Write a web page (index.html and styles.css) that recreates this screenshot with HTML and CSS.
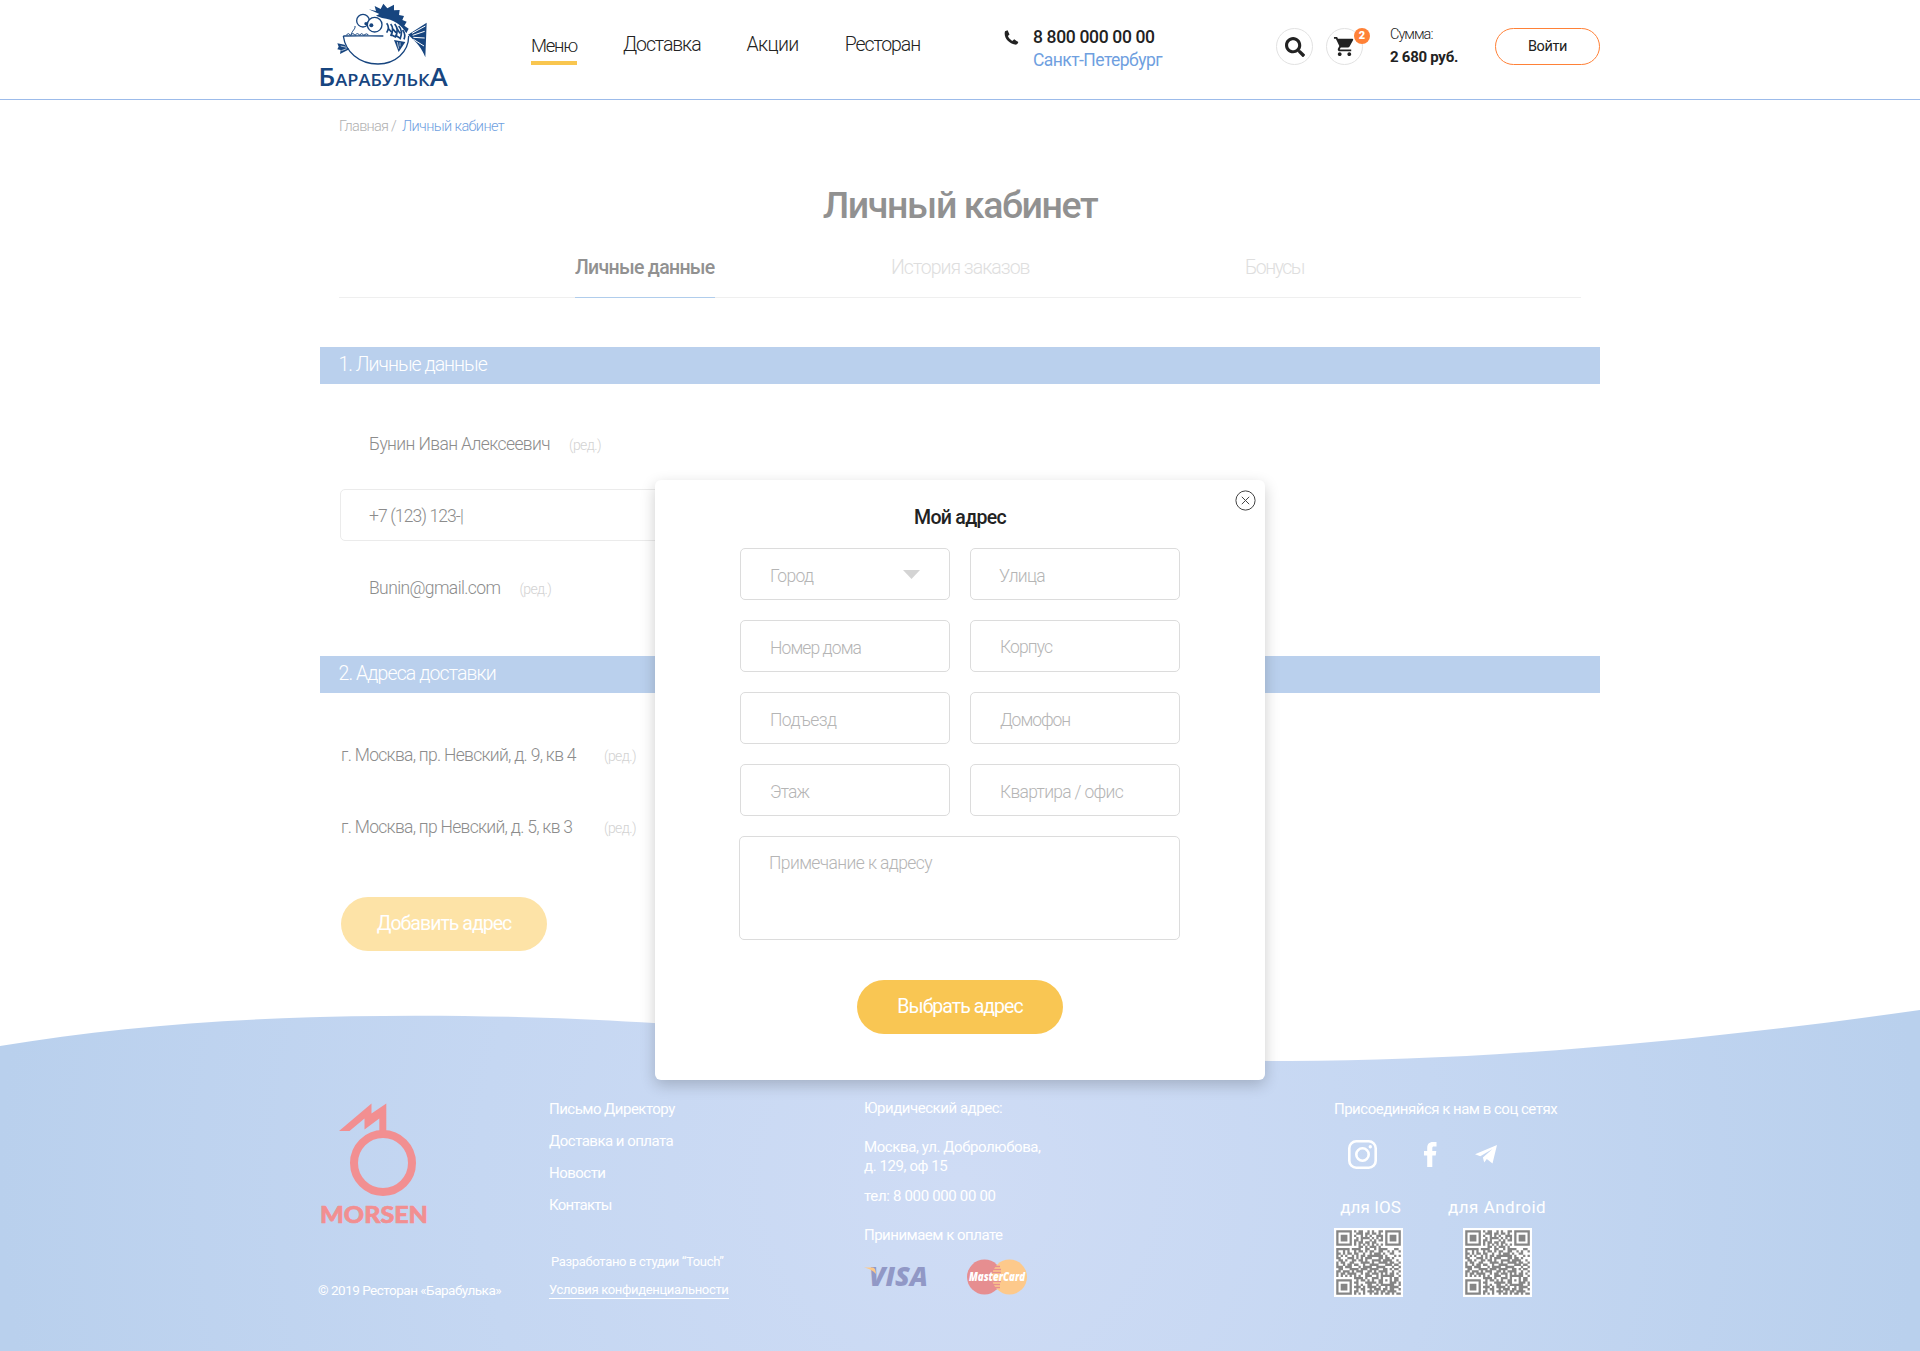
FILE: index.html
```html
<!DOCTYPE html>
<html lang="ru">
<head>
<meta charset="utf-8">
<title>Барабулька — Личный кабинет</title>
<link rel="stylesheet" href="styles.css">
</head>
<body>
<header class="header">
  <div class="header__inner">
    <a class="logo" href="#">
      <svg width="130" height="90" viewBox="0 0 390 270" fill="none" stroke="#17457f" stroke-width="4">
        <path d="M146 28L168 33 164 18 182 27 190 11 202 25 222 14 222 31 239 30 237 45 252 48 247 60 260 65 253 77 266 86 259 100C244 74 222 58 186 54L168 47 178 42z" fill="#17457f" stroke="none"/>
        <path d="M70 108c6 46 46 84 104 84 52 0 92-36 92-84M70 108c48 0 80-1 120 0" />
        <path d="M105 78c2 10-10 14-12 28m-14 0q6-10 12 0 8-10 14 0 8-10 14 0 6-10 12 0 8-8 14-2" stroke-width="3"/>
        <circle cx="129" cy="62" r="19" fill="#fff"/><circle cx="164" cy="74" r="22" fill="#fff"/>
        <circle cx="138" cy="71" r="5" fill="#17457f" stroke="none"/><circle cx="154" cy="76" r="6" fill="#17457f" stroke="none"/>
        <path d="M200 70q10 12 0 28M212 72q12 14 0 36m12-36q14 16 2 40m10-34q14 14 4 40m8-28q10 14 4 28M204 84l10 12m2-12l12 14m2-14l10 16m-26 4l14 8m2-4l12 8" stroke-width="5"/>
        <path d="M264 104l56-36-4 104c-10-26-26-46-52-68z" fill="#17457f" stroke="none"/>
        <path d="M276 100l40-22M278 106l36-12M280 112l34 2M280 118l32 20M278 124l30 36" stroke="#fff" stroke-width="3"/>
        <path d="M222 120l34 6-20 30z" fill="#17457f" stroke="none"/><path d="M232 126l4 20m4-19l0 12" stroke="#fff" stroke-width="2"/>
        <path d="M52 130l22 4 14 14-28 14 2-12-10-2 4-8z" fill="#17457f" stroke="none"/><path d="M62 138l18 4m-16 10l16-6" stroke="#fff" stroke-width="2"/>
        <text class="logo__text" x="-5" y="259" textLength="388" lengthAdjust="spacingAndGlyphs"><tspan font-size="75">Б</tspan><tspan font-size="50">АРАБУЛЬК</tspan><tspan font-size="75">А</tspan></text>
      </svg>
    </a>
    <nav class="nav">
      <a class="nav__link nav__link--active">Меню</a>
      <a class="nav__link">Доставка</a>
      <a class="nav__link">Акции</a>
      <a class="nav__link">Ресторан</a>
    </nav>
    <div class="contact">
      <svg class="contact__icon" width="15" height="15" viewBox="0 0 15 15" fill="#222"><path d="M1 1.200L3.600.2 5.500 4.600 3.900 6C4.800 8 6.200 9.600 8.200 10.900L10.200 9.300 14.300 12.100C13.900 13.800 12.600 14.800 11 14.600 4.800 13.800-.8 7.400 1 1.200z"/></svg>
      <div class="contact__text">
        <span class="contact__phone">8 800 000 00 00</span>
        <span class="contact__city">Санкт-Петербург</span>
      </div>
    </div>
    <div class="tools">
      <a class="round"><svg width="20" height="20" viewBox="0 0 512 512" fill="#222"><path d="M505 442.700L405.300 343c-4.500-4.500-10.600-7-17-7H372c27.600-35.300 44-79.700 44-128C416 93.100 322.900 0 208 0S0 93.100 0 208s93.100 208 208 208c48.300 0 92.700-16.400 128-44v16.300c0 6.400 2.500 12.500 7 17l99.700 99.700c9.400 9.400 24.600 9.400 33.900 0l28.300-28.300c9.400-9.400 9.400-24.600.1-34zM208 336c-70.700 0-128-57.200-128-128 0-70.700 57.200-128 128-128 70.700 0 128 57.200 128 128 0 70.700-57.200 128-128 128z"/></svg></a>
      <a class="round round--cart"><svg width="23" height="23" viewBox="0 0 24 24" fill="#222"><path d="M7 18c-1.100 0-1.990.9-1.990 2S5.900 22 7 22s2-.9 2-2-.9-2-2-2zM1 2v2h2l3.600 7.590-1.350 2.450c-.16.280-.25.610-.25.960 0 1.100.9 2 2 2h12v-2H7.420c-.14 0-.25-.11-.25-.25l.03-.12.9-1.630h7.450c.75 0 1.410-.41 1.750-1.030l3.580-6.490A1.003 1.003 0 0020 4H5.210l-.94-2H1zm16 16c-1.100 0-1.990.9-1.990 2s.89 2 1.990 2 2-.9 2-2-.9-2-2-2z"/></svg><span class="badge">2</span></a>
    </div>
    <div class="sum">
      <span class="sum__label">Сумма:</span>
      <span class="sum__value">2 680 руб.</span>
    </div>
    <a class="login">Войти</a>
  </div>
</header>

<main class="main">
  <div class="crumbs"><span>Главная</span> / <a class="crumbs__current">Личный кабинет</a></div>
  <h1 class="title">Личный кабинет</h1>
  <div class="tabs">
    <a class="tab tab--active">Личные данные</a>
    <a class="tab">История заказов</a>
    <a class="tab">Бонусы</a>
  </div>
  <h2 class="bar">1. Личные данные</h2>
  <div class="profile">
    <div class="row"><span>Бунин Иван Алексеевич</span><a class="edit">(ред.)</a></div>
    <div class="row row--input"><span>+7 (123) 123-|</span></div>
    <div class="row"><span>Bunin@gmail.com</span><a class="edit">(ред.)</a></div>
  </div>
  <h2 class="bar">2. Адреса доставки</h2>
  <div class="addresses">
    <div class="address"><span class="address__text">г. Москва, пр. Невский, д. 9, кв 4</span><a class="edit">(ред.)</a></div>
    <div class="address"><span class="address__text">г. Москва, пр Невский, д. 5, кв 3</span><a class="edit">(ред.)</a></div>
  </div>
  <a class="btn btn--pale">Добавить адрес</a>
</main>

<footer class="footer">
  <svg class="footer__wave" width="1920" height="351" viewBox="0 1000 1920 351">
    <defs><radialGradient id="sea" gradientUnits="userSpaceOnUse" cx="960" cy="1180" r="960"><stop offset="0" stop-color="#cfdcf5"/><stop offset=".5" stop-color="#c5d7f2"/><stop offset="1" stop-color="#b9d0ed"/></radialGradient></defs>
    <path fill="url(#sea)" d="M0 1046C130 1024 270 1015.700 416 1015.700C760 1015.700 940 1061 1290 1061C1500 1061 1730 1037 1920 1010V1351H0Z"/>
  </svg>
  <div class="footer__inner">
    <div class="fcol fcol--brand">
      <svg width="110" height="122" viewBox="0 0 110 122" fill="#f28f91">
        <path d="M19 28L51.500 0.500V10.500L66.300.5V29h-7V15.500L44.500 26.500V15.500L29.500 28z"/>
        <circle cx="63" cy="60" r="29" fill="none" stroke="#f28f91" stroke-width="8"/>
        <text class="morsen" x="0" y="119.500" textLength="108" lengthAdjust="spacingAndGlyphs">MORSEN</text>
      </svg>
      <span class="copy">© 2019 Ресторан «Барабулька»</span>
    </div>
    <div class="fcol fcol--links">
      <a>Письмо Директору</a>
      <a>Доставка и оплата</a>
      <a>Новости</a>
      <a class="tight">Контакты</a>
      <span class="studio">Разработано в студии “Touch”</span>
      <a class="policy">Условия конфиденциальности</a>
    </div>
    <div class="fcol fcol--legal">
      <span>Юридический адрес:</span>
      <p class="place">Москва, ул. Добролюбова,<br>д. 129, оф 15</p>
      <span class="tel">тел: 8 000 000 00 00</span>
      <span class="pay">Принимаем к оплате</span>
      <div class="cards">
        <svg class="visa" width="65" height="20" viewBox="0 0 65 20"><text x="5" y="19.300" textLength="59" lengthAdjust="spacingAndGlyphs">VISA</text><path fill="#fdc989" d="M0 .5h8.500c2 0 3 1.500 3.500 6.500C9 3.500 5 1.500 0 .5z"/></svg>
        <svg class="mc" width="60" height="36" viewBox="0 0 60 36"><circle cx="17.500" cy="18" r="17.500" fill="#e68e90"/><circle cx="42.500" cy="18" r="17.500" fill="#fdc98b"/><path d="M26 7.500h7M25 10.500h9M25 13.500h9M25 22.500h9M25 25.500h8M26 28.500h7" stroke="#e68e90" stroke-width="1.500"/><text x="2" y="22" textLength="56" lengthAdjust="spacingAndGlyphs">MasterCard</text></svg>
      </div>
    </div>
    <div class="fcol fcol--social">
      <span>Присоединяйся к нам в соц сетях</span>
      <div class="social">
        <svg width="29" height="29" viewBox="0 0 29 29" fill="none" stroke="#fff" stroke-width="2.600"><rect x="1.300" y="1.300" width="26.400" height="26.400" rx="7"/><circle cx="14.500" cy="14.500" r="6.200"/><circle cx="22.300" cy="6.800" r="1.700" fill="#fff" stroke="none"/></svg>
        <svg width="13" height="25" viewBox="0 0 13 25" fill="#fff"><path d="M3.200 25V13.500H0V9h3.200V6.200C3.200 2.200 5 0 9 0h3.500v4.500H10C8.600 4.500 8.300 5 8.300 6.300V9h4l-.6 4.500H8.300V25z"/></svg>
        <svg width="22" height="19" viewBox="0 0 22 19" fill="#fff"><path d="M0 9.200L22 0 17.500 18.500 11.800 14 9.200 17.500 7.900 12.500 17.500 4 5.300 11.200z"/></svg>
      </div>
      <div class="apps">
        <div class="app"><span class="app__name">для IOS</span><svg class="qr" width="69" height="69" viewBox="-1 -1 31 31"></svg></div>
        <div class="app"><span class="app__name app__name--wide">для Android</span><svg class="qr" width="69" height="69" viewBox="-1 -1 31 31"></svg></div>
      </div>
    </div>
  </div>
</footer>

<section class="modal">
  <a class="modal__close"><svg width="21" height="21" viewBox="0 0 21 21" fill="none" stroke="#444"><circle cx="10.500" cy="10.500" r="9.600"/><path d="M6.800 6.800l7.400 7.400m0-7.400l-7.400 7.400"/></svg></a>
  <h3 class="modal__title">Мой адрес</h3>
  <form class="form">
    <div class="field field--select"><span>Город</span><svg width="17" height="9" viewBox="0 0 17 9" fill="#d4d4d4"><path d="M0 0h17L8.500 9z"/></svg></div>
    <div class="field"><span>Улица</span></div>
    <div class="field"><span>Номер дома</span></div>
    <div class="field field--up"><span>Корпус</span></div>
    <div class="field"><span>Подъезд</span></div>
    <div class="field"><span>Домофон</span></div>
    <div class="field"><span>Этаж</span></div>
    <div class="field"><span>Квартира / офис</span></div>
    <div class="field field--area"><span>Примечание к адресу</span></div>
  </form>
  <a class="btn">Выбрать адрес</a>
</section>
<script src="script.js"></script>
</body>
</html>
```
FILE: styles.css
```css
* { box-sizing: border-box; }
body { margin: 0; position: relative; height: 1351px; overflow: hidden; background: #fff; color: #222; font-family: Roboto, "Noto Sans", sans-serif; font-weight: 300; }
h1, h2, h3, p { margin: 0; font-weight: inherit; }
span, a { white-space: nowrap; }

/* header */
.header { height: 100px; border-bottom: 1px solid #9cbbea; }
.header__inner { width: 1280px; margin: 0 auto; display: flex; }
.logo { width: 211px; height: 90px; }
.logo svg { display: block; overflow: visible; }
.logo__text { font-family: "Open Sans", sans-serif; font-weight: 600; fill: #17457f; stroke: none; }
.nav { display: flex; gap: 46px; width: 473px; padding-top: 33px; }
.nav__link { font-size: 19.500px; line-height: 24px; height: 32px; letter-spacing: -1.080px; }
.nav__link--active { width: 46px; margin-top: 1px; border-bottom: 4px solid #f9c64f; font-size: 18.500px; line-height: 24px; height: 31px; letter-spacing: -1.250px; }
.nav__link:nth-child(3) { letter-spacing: -.65px; }
.contact { display: flex; width: 272px; padding-top: 26px; gap: 14px; }
.contact__icon { margin-top: 4px; }
.contact__text { display: flex; flex-direction: column; font-size: 17.500px; line-height: 23px; }
.contact__phone { font-weight: 500; letter-spacing: -.34px; }
.contact__city { font-weight: 400; color: #6f9fdf; letter-spacing: -.56px; }
.tools { display: flex; gap: 13px; padding-top: 28px; width: 114px; }
.round { width: 37px; height: 37px; border: 1px solid #e2e2e2; border-radius: 50%; display: flex; align-items: center; justify-content: center; position: relative; }
.badge { position: absolute; left: 27px; top: -1px; width: 16px; height: 16px; border-radius: 50%; background: #ff8137; color: #fff; font-size: 11px; font-weight: 900; line-height: 16px; text-align: center; }
.sum { display: flex; flex-direction: column; width: 105px; padding-top: 24px; }
.sum__label { font-size: 14.500px; line-height: 22px; letter-spacing: -.98px; }
.sum__value { font-size: 15px; line-height: 22px; font-weight: 700; letter-spacing: -.27px; }
.login { width: 105px; height: 37px; margin-top: 28px; border: 1px solid #ff8137; border-radius: 18.500px; font-size: 14.500px; line-height: 35px; font-weight: 400; text-align: center; letter-spacing: -.4px; }

/* account page */
.main { width: 1280px; margin: 0 auto; height: 910px; display: flex; flex-direction: column; }
.crumbs { padding: 17px 0 0 19px; font-size: 14.500px; line-height: 20px; color: #b0b0b0; letter-spacing: -.7px; }
.crumbs__current { margin-left: 3px; color: #6f9fdf; letter-spacing: -.61px; }
.title { margin-top: 44px; font-size: 37.500px; line-height: 48px; font-weight: 500; text-align: center; color: #919191; letter-spacing: -1.380px; }
.tabs { margin: 27px 19px 0; height: 42px; border-bottom: 1px solid #efefef; display: flex; padding-left: 236px; }
.tab { font-size: 19.500px; line-height: 24px; height: 42px; color: #dedede; letter-spacing: -1px; }
.tab--active { color: #919191; font-weight: 500; border-bottom: 1px solid #b0cdec; letter-spacing: -.7px; }
.tab:nth-child(1) { width: 140px; margin-right: 176px; }
.tab:nth-child(2) { width: 139px; margin-right: 215px; }
.tab:nth-child(3) { letter-spacing: -1.500px; }
.bar { margin-top: 49px; height: 37px; background: #bad0ed; padding-left: 18.500px; font-size: 19.500px; line-height: 35px; color: #fff; letter-spacing: -.98px; }
.profile { padding: 33px 0 0 20px; display: flex; flex-direction: column; gap: 20px; }
.row { height: 52px; width: 640px; padding-left: 28px; display: flex; gap: 19px; border: 1px solid transparent; border-radius: 5px; font-size: 17.500px; line-height: 52px; color: #8c8c8c; letter-spacing: -.61px; }
.row--input { border-color: #ebebeb; letter-spacing: -.9px; }
.edit { font-size: 14px; line-height: 54px; color: #d2d2d2; letter-spacing: -.58px; }
.profile + .bar { margin-top: 43px; letter-spacing: -.9px; }
.addresses { padding: 36px 0 0 21px; display: flex; flex-direction: column; gap: 20px; }
.address { display: flex; height: 52px; line-height: 52px; font-size: 17.500px; color: #8c8c8c; letter-spacing: -.71px; }
.address__text { width: 263px; }
.btn { display: block; width: 206px; height: 54px; border-radius: 27px; background: #f9c653; color: #fff; font-size: 19.500px; font-weight: 400; line-height: 53px; text-align: center; letter-spacing: -.98px; }
.btn--pale { background: #fde3a7; margin: 44px 0 0 21px; }

/* footer */
.footer { position: relative; height: 341px; color: #fff; font-size: 15px; font-weight: 400; line-height: 20px; letter-spacing: -.45px; }
.footer__wave { position: absolute; left: 0; top: -10px; }
.footer__inner { position: relative; width: 1280px; margin: 0 auto; padding-top: 88px; display: flex; }
.fcol { display: flex; flex-direction: column; align-items: flex-start; }
.fcol--brand { width: 229px; padding-top: 5px; }
.morsen { font: 900 22.500px Lato, sans-serif; letter-spacing: 0; stroke: #f28f91; stroke-width: .6px; }
.copy { font-size: 13.500px; margin: 55px 0 0 -2px; letter-spacing: -.5px; }
.fcol--links { width: 315px; gap: 12px; padding-top: 1px; letter-spacing: -.52px; }
.tight { letter-spacing: -.78px; }
.studio { font-size: 13px; margin: 25px 0 0 2px; letter-spacing: -.33px; }
.policy { font-size: 13px; line-height: 16px; margin-top: -2px; border-bottom: 1px solid #fff; letter-spacing: -.33px; }
.fcol--legal { width: 470px; }
.place { margin-top: 20px; line-height: 19px; letter-spacing: -.41px; }
.tel { margin-top: 10px; letter-spacing: -.33px; }
.pay { margin-top: 19px; letter-spacing: -.5px; }
.cards { display: flex; gap: 38px; align-items: center; margin-top: 14px; letter-spacing: 0; }
.visa { overflow: visible; font: italic 800 26px "Open Sans", sans-serif; fill: #9198c6; }
.mc { font: italic 800 13px "Open Sans", sans-serif; fill: #fff; }
.fcol--social { padding-top: 1px; letter-spacing: -.5px; }
.social { display: flex; align-items: center; margin: 21px 0 0 14px; }
.social svg:nth-child(2) { margin: 0 38px 0 47px; }
.apps { display: flex; gap: 45px; margin-top: 28px; }
.app { display: flex; flex-direction: column; gap: 10px; align-items: center; }
.app__name { font-size: 17px; line-height: 21px; padding-left: 4px; letter-spacing: .1px; }
.app__name--wide { padding-left: 0; letter-spacing: .5px; }
.qr { background: #fff; fill: #858585; }

/* address dialog */
.modal { position: absolute; left: 655px; top: 480px; width: 610px; height: 600px; border-radius: 6px; background: #fff; box-shadow: 0 5px 15px rgba(0,0,0,.2); display: flex; flex-direction: column; align-items: center; }
.modal__close { position: absolute; right: 9px; top: 10px; height: 21px; }
.modal__title { margin-top: 26px; font-size: 19.500px; line-height: 24px; font-weight: 500; letter-spacing: -.7px; }
.form { width: 440px; margin-top: 18px; display: grid; grid-template-columns: 210px 210px; gap: 20px; }
.field { height: 52px; border: 1px solid #dcdcdc; border-radius: 5px; padding: 17px 29px 0; display: flex; align-items: flex-start; justify-content: space-between; font-size: 17.500px; line-height: 21px; color: #b5b5b5; letter-spacing: -.9px; }
.field svg { margin-top: 4px; }
.field:nth-child(-n+2), .field:nth-child(8) { letter-spacing: -.7px; }
.field:nth-child(2) { padding-left: 28px; }
.field:nth-child(5) { letter-spacing: -.55px; }
.field:nth-child(6) { letter-spacing: -1.050px; }
.field--up { padding-top: 16px; }
.field--area { grid-column: 1 / 3; height: 104px; margin-left: -1px; padding-top: 16px; letter-spacing: -.6px; }
.modal .btn { margin-top: 40px; }
```
FILE: script.js
```js
// App download code, one character per module
const rows = [
"#######.#.##..#.#..##.#######",
"#.....#..###.##.##.#..#.....#",
"#.###.#.#..#.#.#..###.#.###.#",
"#.###.#..#.####.#.#.#.#.###.#",
"#.###.#.##.#...#.#.##.#.###.#",
"#.....#.#.##.##.##....#.....#",
"#######.#.#.#.#.#.#.#.#######",
"..........##.#.###.#.........",
"######.####..##..#.####...##.",
"#..#.#..#.##.#.##..##..#.#..#",
"##.#.##.##..#..#.###.#..##...",
"#.#.#..#.#.##.#######.#...#.#",
"##...###.#.#.###...##.##.#...",
".##.#..##.##.#..####.####..#.",
"#.##..##...####.#..####.##..#",
"#..#.##.##..#..####...###.##.",
"###.###...#.####..####...#..#",
".##...####.###.####..##.#.##.",
"##.###.#.###..##.#.####..#..#",
"#.##.####..#.##.###.#.#.##.#.",
"#.#.#.#.#.#..###..#.######..#",
"........####.#..###.#...#.##.",
"#######..#.##.#.#..##.#.#.##.",
"#.....#.##...#####.##...###.#",
"#.###.#..#.#..##..#.######..#",
"#.###.#.###.#.####.#..#.####.",
"#.###.#..#.##..#.###.##.##..#",
"#.....#.##..#.###.#.##.####..",
"#######.#.#.#..#.##.#.##.#.##"
];
let d = "";
rows.forEach((r, y) => [...r].forEach((c, x) => { if (c === "#") d += `M${x} ${y}h1.03v1.03h-1.03z`; }));
document.querySelectorAll(".qr").forEach(q => {
  const p = document.createElementNS("http://www.w3.org/2000/svg", "path");
  p.setAttribute("d", d);
  q.append(p);
});
```
